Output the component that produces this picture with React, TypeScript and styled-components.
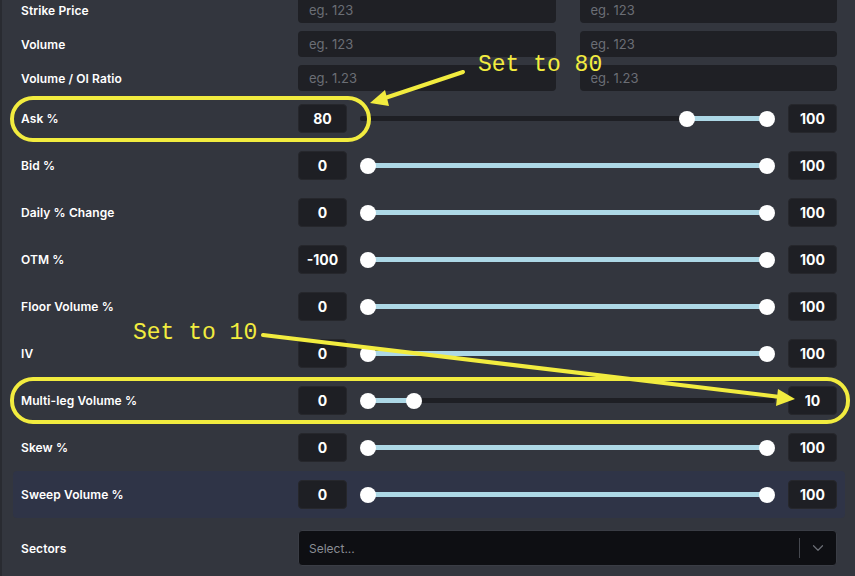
import React from 'react';
import styled, { createGlobalStyle } from 'styled-components';
import { ChevronDown } from 'lucide-react';

const GlobalStyle = createGlobalStyle`
  html, body {
    margin: 0;
    padding: 0;
    background: #33363e;
    overflow: hidden;
  }
  body {
    font-family: Inter, "Noto Sans", sans-serif;
    color: #ffffff;
  }
`;

const Page = styled.div`
  position: relative;
  width: 855px;
  height: 576px;
  box-sizing: border-box;
  border-left: 2px solid #292b31;
  overflow: hidden;
`;

const Panel = styled.div`
  margin-top: -7px;
  padding: 0 10px 0 11px;
  display: flex;
  flex-direction: column;
`;

const Row = styled.div<{ $height?: number; $highlight?: boolean }>`
  display: grid;
  grid-template-columns: 277px 1fr;
  align-items: center;
  height: ${p => p.$height ?? 47}px;
  padding: 0 8px;
  border-radius: 4px;
  background: ${p => (p.$highlight ? '#2f3447' : 'transparent')};
`;

const SelectRow = styled(Row)`
  height: auto;
  padding: 12px 8px 8px;
`;

const Label = styled.div`
  font-size: 12px;
  font-weight: 600;
  letter-spacing: 0.1px;
  color: #ffffff;
`;

const Pair = styled.div`
  display: grid;
  grid-template-columns: 1fr 1fr;
  gap: 24px;
`;

const TextInput = styled.div`
  height: 26px;
  border-radius: 4px;
  background: #1f2025;
  display: flex;
  align-items: center;
  padding-left: 11px;
  font-size: 13px;
  color: #6b6e75;
`;

const RangeControl = styled.div`
  display: flex;
  align-items: center;
  gap: 13px;
`;

const NumberBox = styled.div`
  width: 49px;
  height: 29px;
  box-sizing: border-box;
  flex: none;
  border-radius: 4px;
  border: 1px solid #26272c;
  background: #1e1f24;
  display: flex;
  align-items: center;
  justify-content: center;
  font-size: 14px;
  font-weight: 700;
  color: #ffffff;
`;

const Track = styled.div`
  position: relative;
  flex: 1;
  height: 5px;
  border-radius: 2px;
  background: #1e1f24;
`;

const Fill = styled.div`
  position: absolute;
  top: 0;
  bottom: 0;
  background: #add8e6;
`;

const Thumb = styled.div`
  position: absolute;
  top: 50%;
  width: 16px;
  height: 16px;
  margin: -8px 0 0 -8px;
  border-radius: 50%;
  background: #ffffff;
`;

const SelectBox = styled.div`
  height: 36px;
  box-sizing: border-box;
  border: 1px solid #3a3d45;
  border-radius: 4px;
  background: #0e0f13;
  display: flex;
  align-items: center;
  padding-left: 10px;
  font-size: 12px;
  color: #8a8d94;
`;

const SelectText = styled.span`
  flex: 1;
`;

const Divider = styled.span`
  width: 1px;
  height: 20px;
  background: #45484f;
`;

const Caret = styled.span`
  width: 36px;
  display: flex;
  justify-content: center;
  color: #6b6e75;
`;

const Outline = styled.div`
  position: absolute;
  box-sizing: border-box;
  border: 4px solid #f2ec3f;
  border-radius: 23px;
  pointer-events: none;
`;

const Note = styled.span`
  position: absolute;
  font-family: "Liberation Mono", "DejaVu Sans Mono", monospace;
  font-size: 23px;
  line-height: 1;
  color: #f2ec3f;
  white-space: nowrap;
`;

const Arrows = styled.svg`
  position: absolute;
  left: -2px;
  top: 0;
  pointer-events: none;
`;

type Range = { label: string; min: string; max: string; lo: number; hi: number; highlight?: boolean };

const ranges: Range[] = [
  { label: 'Ask %', min: '80', max: '100', lo: 80, hi: 100 },
  { label: 'Bid %', min: '0', max: '100', lo: 0, hi: 100 },
  { label: 'Daily % Change', min: '0', max: '100', lo: 0, hi: 100 },
  { label: 'OTM %', min: '-100', max: '100', lo: 0, hi: 100 },
  { label: 'Floor Volume %', min: '0', max: '100', lo: 0, hi: 100 },
  { label: 'IV', min: '0', max: '100', lo: 0, hi: 100 },
  { label: 'Multi-leg Volume %', min: '0', max: '10', lo: 0, hi: 11.5 },
  { label: 'Skew %', min: '0', max: '100', lo: 0, hi: 100 },
  { label: 'Sweep Volume %', min: '0', max: '100', lo: 0, hi: 100, highlight: true },
];

const textRows = [
  { label: 'Strike Price', hint: 'eg. 123' },
  { label: 'Volume', hint: 'eg. 123' },
  { label: 'Volume / OI Ratio', hint: 'eg. 1.23' },
];

// thumbs sit inside the track, inset by their radius
const at = (v: number) => `calc(8px + (100% - 16px) * ${v / 100})`;

const Slider = ({ lo, hi }: { lo: number; hi: number }) => (
  <Track>
    <Fill style={{ left: at(lo), right: `calc(100% - ${at(hi)})` }} />
    <Thumb style={{ left: at(lo) }} />
    <Thumb style={{ left: at(hi) }} />
  </Track>
);

export default function App() {
  return (
    <Page>
      <GlobalStyle />
      <Panel>
        {textRows.map(r => (
          <Row key={r.label} $height={34}>
            <Label>{r.label}</Label>
            <Pair>
              <TextInput>{r.hint}</TextInput>
              <TextInput>{r.hint}</TextInput>
            </Pair>
          </Row>
        ))}
        {ranges.map(r => (
          <Row key={r.label} $highlight={r.highlight}>
            <Label>{r.label}</Label>
            <RangeControl>
              <NumberBox>{r.min}</NumberBox>
              <Slider lo={r.lo} hi={r.hi} />
              <NumberBox>{r.max}</NumberBox>
            </RangeControl>
          </Row>
        ))}
        <SelectRow>
          <Label>Sectors</Label>
          <SelectBox>
            <SelectText>Select...</SelectText>
            <Divider />
            <Caret>
              <ChevronDown size={18} strokeWidth={1.6} />
            </Caret>
          </SelectBox>
        </SelectRow>
      </Panel>

      <Outline style={{ left: 8, top: 96, width: 361, height: 46 }} />
      <Outline style={{ left: 8, top: 377, width: 840, height: 47 }} />
      <Note style={{ left: 476, top: 54 }}>Set to 80</Note>
      <Note style={{ left: 131, top: 322 }}>Set to 10</Note>

      <Arrows width="855" height="576" viewBox="0 0 855 576">
        <g stroke="#f2ec3f" strokeWidth="4" strokeLinecap="round" fill="#f2ec3f">
          <line x1="463" y1="72" x2="382" y2="99" />
          <polygon points="370,103 385,90 389,106" stroke="none" />
          <line x1="263" y1="335" x2="780" y2="397" />
          <polygon points="795,399 778,389 776,406" stroke="none" />
        </g>
      </Arrows>
    </Page>
  );
}
